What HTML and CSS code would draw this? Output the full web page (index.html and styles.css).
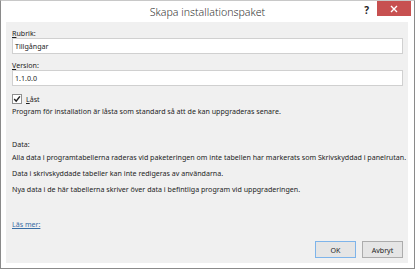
FILE: index.html
```html
<!DOCTYPE html>
<html>
<head>
	<title>Skapa installationspaket</title>
	<link rel="stylesheet" href="styles.css">
</head>
<body>
	<div class='window'>
		<div class='titlebar'>
			<div></div>
			<div class='title'>Skapa installationspaket</div>
			<div class='controls'>
				<span class='help'>?</span>
				<span class='close'>
					<svg width="8" height="8" viewBox="0 0 8 8"><path d="M1 1L7 7M7 1L1 7" stroke="#fff" stroke-width="1.4"/></svg>
				</span>
			</div>
		</div>
		<div class='content'>
			<label class='label'><u>R</u>ubrik:</label>
			<div class='field'>Tillgångar</div>
			<label class='label label-gap'><u>V</u>ersion:</label>
			<div class='field'>1.1.0.0</div>
			<div class='check-row'>
				<span class='checkbox'>
					<svg width="8" height="8" viewBox="0 0 8 8"><path d="M1.2 4L3.2 6.2L6.9 1.4" fill="none" stroke="#222" stroke-width="1.5"/></svg>
				</span>
				<span><u>L</u>åst</span>
			</div>
			<p class='note'>Program för installation är låsta som standard så att de kan uppgraderas senare.</p>
			<p class='data-head'>Data:</p>
			<p class='line'>Alla data i programtabellerna raderas vid paketeringen om inte tabellen har markerats som Skrivskyddad i panelrutan.</p>
			<p class='line line-gap'>Data i skrivskyddade tabeller kan inte redigeras av användarna.</p>
			<p class='line line-gap'>Nya data i de här tabellerna skriver över data i befintliga program vid uppgraderingen.</p>
			<a class='more' href='#'>Läs mer:</a>
			<div class='buttons'>
				<button class='btn btn-default'>OK</button>
				<button class='btn'>Avbryt</button>
			</div>
		</div>
	</div>
</body>
</html>
```
FILE: styles.css
```css
body {
	margin: 0;
	background-color: #ffffff;
	font-family: "Noto Sans", "Open Sans", sans-serif;
	color: #1e1e1e;
}

.window {
	width: 415px;
	height: 269px;
	box-sizing: border-box;
	border: 1px solid #8a8a8a;
	border-top-color: #c8c8c8;
	background-color: #ffffff;
	display: flex;
	flex-direction: column;
}

.titlebar {
	height: 21px;
	flex-shrink: 0;
	display: grid;
	grid-template-columns: 1fr auto 1fr;
	align-items: start;
}

.title {
	font-size: 10.6px;
	line-height: 22px;
	color: #333;
	font-weight: 300;
}

.controls {
	display: flex;
	justify-content: flex-end;
	align-items: flex-start;
	margin-right: 3px;
}

.help {
	font-size: 10px;
	font-weight: bold;
	line-height: 14px;
	margin-right: 8px;
	margin-top: 2px;
	color: #222;
}

.close {
	width: 34px;
	height: 15px;
	background-color: #c75050;
	display: flex;
	align-items: center;
	justify-content: center;
}

.content {
	flex: 1;
	min-height: 0;
	margin: 0 6px 5px 5px;
	background-color: #f0f0f0;
	padding: 6px 5px 0 6px;
	display: flex;
	flex-direction: column;
	font-size: 7.1px;
}

.label {
	display: block;
	line-height: 10px;
}

.label-gap {
	margin-top: 6px;
}

.field {
	height: 16px;
	flex-shrink: 0;
	box-sizing: border-box;
	border: 1px solid #d0d0d0;
	background-color: #fff;
	padding: 0 2px;
	line-height: 14px;
}

.check-row {
	display: flex;
	align-items: center;
	gap: 4px;
	margin-top: 8px;
	line-height: 10px;
}

.checkbox {
	width: 8px;
	height: 8px;
	border: 1px solid #8f8f8f;
	background-color: #fff;
	display: flex;
	align-items: center;
	justify-content: center;
}

.note {
	margin: 2px 0 0 0;
	line-height: 10px;
}

.data-head {
	margin: 23px 0 0 0;
	line-height: 10px;
}

.line {
	margin: 3px 0 0 0;
	line-height: 10px;
	white-space: nowrap;
}

.line-gap {
	margin-top: 6px;
}

.more {
	margin-top: 25px;
	line-height: 10px;
	color: #3a6ea5;
	align-self: flex-start;
}

.buttons {
	display: flex;
	justify-content: flex-end;
	gap: 6px;
	margin-top: 12px;
}

.btn {
	width: 41px;
	height: 17px;
	font-family: inherit;
	font-size: 7.1px;
	color: #1e1e1e;
	background-color: #e5e5e5;
	border: 1px solid #acacac;
	padding: 0;
}

.btn-default {
	border-color: #7eb4ea;
}
```
